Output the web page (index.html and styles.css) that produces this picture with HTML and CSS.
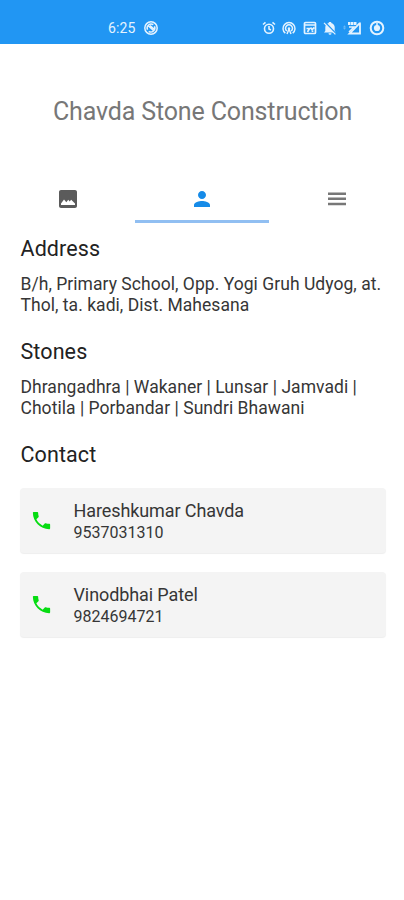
FILE: index.html
```html
<!DOCTYPE html>
<html lang="en">
<head>
<meta charset="utf-8">
<meta name="viewport" content="width=device-width">
<title>Chavda Stone Construction</title>
<link rel="stylesheet" href="styles.css">
</head>
<body>
<div class="status">
  <span class="time">6:25</span>
  <svg class="sync" width="16" height="16" viewBox="0 0 16 16" fill="none" stroke="currentColor" stroke-width="1.5"><circle cx="8" cy="8" r="6.200"/><path d="M4.500 9.700a4 4 0 0 1 5.800-5M11.500 6.300a4 4 0 0 1-5.800 5M5.500 6l5 4.500M7 5.500l4 3.500"/></svg>
  <div class="system">
    <svg width="14" height="14" viewBox="0 0 14 14" fill="none" stroke="currentColor" stroke-width="1.600"><circle cx="7" cy="7.800" r="4.500"/><path d="M1 3.500L3.500 1.400M13 3.500l-2.500-2.100M7 5v3l2 1"/></svg>
    <svg width="14" height="14" viewBox="0 0 14 14" fill="none" stroke="currentColor" stroke-width="1.500"><path d="M3.300 12.200a6 6 0 1 1 7.400 0M4.800 10a3.500 3.500 0 1 1 4.400 0"/><circle cx="7" cy="7.500" r="1.200" fill="currentColor" stroke="none"/><path d="M7 8l-2 5M7 8l2 5"/></svg>
    <svg width="14" height="14" viewBox="0 0 14 14" fill="none" stroke="currentColor" stroke-width="1.700"><rect x="1.500" y="1.500" width="11" height="11" rx="1"/><path d="M2 4h10M3.500 7.500h3l-2 3.500M7.500 6.500l1.500 2 2.500-2M9.500 11V9.500"/></svg>
    <svg width="14" height="14" viewBox="0 0 14 14" fill="currentColor"><path d="M2.300 10V6c0-2 1.700-3.700 3.500-4.100V1h2.400v.9c1.800.4 3.500 2.100 3.500 4.100v4l1.300 1.600H1zM5.500 12.200h3a1.500 1.500 0 0 1-3 0z"/><path d="M1.800 1l11.500 12" stroke="#2196f3" stroke-width="1.500"/><path d="M1 1.800l11.400 11.500" stroke="currentColor" stroke-width="1.200"/></svg>
    <svg class="signal" width="19" height="14" viewBox="0 0 19 14" fill="none" stroke="currentColor"><path d="M1 5h1v3H1z" opacity=".3"/><path d="M5 2.500h9" stroke-width="3" stroke-dasharray="2.500 .5"/><path d="M17 1.500v11H6.500L17 2z" stroke-width="1.800"/><path d="M6 6h5l-5 5" stroke-width="1.500"/></svg>
    <svg width="16" height="16" viewBox="0 0 16 16"><circle cx="8" cy="8" r="6.300" fill="none" stroke="currentColor" stroke-width="2"/><circle cx="8" cy="8" r="3.100" fill="currentColor"/><path d="M8 3v3" stroke="currentColor" stroke-width="1.500"/></svg>
  </div>
</div>
<header class="title"><h1>Chavda Stone Construction</h1></header>
<nav class="tabs">
  <a class="tab"><svg width="24" height="24" viewBox="0 0 24 24" fill="currentColor"><path d="M21 19V5c0-1.100-.9-2-2-2H5c-1.100 0-2 .9-2 2v14c0 1.100.9 2 2 2h14c1.100 0 2-.9 2-2zM5 18v-1.500l3-4 2.300 2.700 2-2.400 1.300 1.700 1.600-1.800L19 16.500V18z"/></svg></a>
  <a class="tab active"><svg width="24" height="24" viewBox="0 0 24 24" fill="currentColor"><path d="M12 12c2.210 0 4-1.790 4-4s-1.790-4-4-4-4 1.790-4 4 1.790 4 4 4zm0 2c-2.670 0-8 1.340-8 4v2h16v-2c0-2.660-5.330-4-8-4z"/></svg></a>
  <a class="tab menu"><svg width="24" height="24" viewBox="0 0 24 24" fill="currentColor"><path d="M3 5.500h18v2.500H3zM3 10.600h18v2.500H3zM3 15.700h18v2.500H3z"/></svg></a>
</nav>
<main>
  <h2>Address</h2>
  <p>B/h, Primary School, Opp. Yogi Gruh Udyog, at.<br>Thol, ta. kadi, Dist. Mahesana</p>
  <h2>Stones</h2>
  <p>Dhrangadhra | Wakaner | Lunsar | Jamvadi |<br>Chotila | Porbandar | Sundri Bhawani</p>
  <h2>Contact</h2>
  <div class="cards">
    <div class="card">
      <svg width="23" height="23" viewBox="0 0 24 24" fill="currentColor"><path d="M6.620 10.790c1.440 2.830 3.760 5.140 6.590 6.590l2.200-2.200c.27-.27.67-.36 1.020-.24 1.120.37 2.330.57 3.570.57.55 0 1 .45 1 1V20c0 .55-.45 1-1 1-9.390 0-17-7.610-17-17 0-.55.45-1 1-1h3.500c.55 0 1 .45 1 1 0 1.250.2 2.450.57 3.570.11.35.03.74-.25 1.020l-2.200 2.200z"/></svg>
      <div class="person"><div class="name">Hareshkumar Chavda</div><div class="phone">9537031310</div></div>
    </div>
    <div class="card">
      <svg width="23" height="23" viewBox="0 0 24 24" fill="currentColor"><path d="M6.620 10.790c1.440 2.830 3.760 5.140 6.590 6.590l2.200-2.200c.27-.27.67-.36 1.020-.24 1.120.37 2.330.57 3.570.57.55 0 1 .45 1 1V20c0 .55-.45 1-1 1-9.390 0-17-7.610-17-17 0-.55.45-1 1-1h3.500c.55 0 1 .45 1 1 0 1.250.2 2.450.57 3.570.11.35.03.74-.25 1.020l-2.200 2.200z"/></svg>
      <div class="person"><div class="name">Vinodbhai Patel</div><div class="phone">9824694721</div></div>
    </div>
  </div>
</main>
</body>
</html>
```
FILE: styles.css
```css
* { box-sizing: border-box; }
body { margin: 0; min-height: 900px; background: #fff; font-family: Roboto, sans-serif; color: #222; }
h1, h2, p { margin: 0; font-weight: 400; }
svg { display: block; flex: none; }
.status { height: 44px; padding: 11px 19.500px 0 108px; background: #2196f3; color: #e4f3ff; display: flex; align-items: center; }
.time { font-size: 14px; line-height: 16px; letter-spacing: .1px; width: 35px; }
.system { margin-left: auto; display: flex; align-items: center; gap: 6.600px; }
.signal { margin-left: -1px; }
.title { height: 131px; padding: 53px 0 0 1px; text-align: center; }
.title h1 { font-size: 25px; line-height: 30px; color: #777; white-space: nowrap; letter-spacing: -.14px; }
.tabs { height: 48px; display: grid; grid-template-columns: repeat(3, 1fr); }
.tab { display: flex; justify-content: center; padding: 12px 0 0 1px; border-bottom: 3px solid transparent; color: #5b5b5b; }
.tab.active { color: #168be8; border-color: #91bff2; }
.tab.menu { color: #777; }
main { padding: 12px 18px 0 20px; }
h2 { font-size: 21.500px; line-height: 28px; letter-spacing: .1px; padding-left: .5px; }
p { font-size: 17.500px; line-height: 21px; margin: 11px 0 22px; padding-left: .5px; white-space: nowrap; color: #363636; letter-spacing: .04px; }
.cards { display: grid; gap: 19px; margin-top: 19px; }
.card { height: 65px; border-radius: 4px; background: #f4f4f4; box-shadow: 0 1px 1px #eee; display: flex; align-items: center; padding-left: 10px; gap: 20px; color: #06dc12; }
.person { padding: 1px 0 0 .5px; }
.name { font-size: 18px; line-height: 23px; letter-spacing: -.1px; color: #363636; }
.phone { font-size: 16px; line-height: 21px; color: #363636; }
```
